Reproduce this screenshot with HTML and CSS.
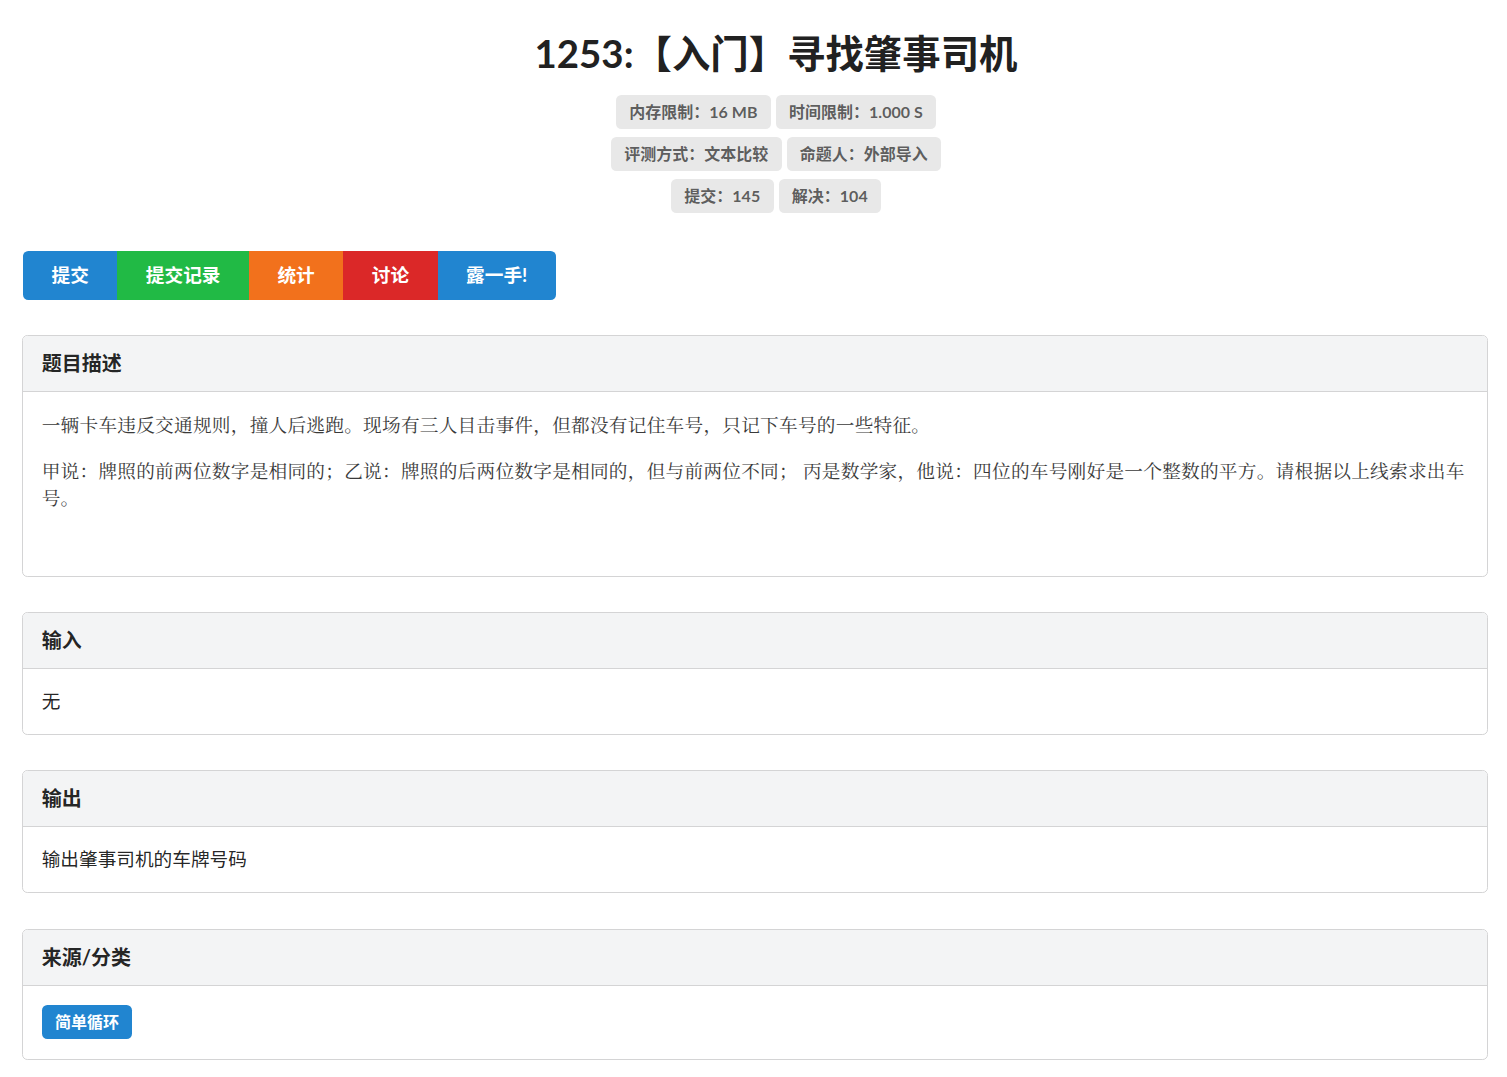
FILE: index.html
```html
<!DOCTYPE html>
<html lang="zh-CN">
<head>
<meta charset="utf-8">
<title>1253:【入门】寻找肇事司机</title>
<link rel="stylesheet" href="styles.css">
</head>
<body>
<div class="page">
  <div class="top">
    <h1 class="title">1253:【入门】寻找肇事司机</h1>
    <div class="meta">
      <div class="meta-row">
        <span class="label">内存限制：16 MB</span>
        <span class="label">时间限制：1.000 S</span>
      </div>
      <div class="meta-row">
        <span class="label">评测方式：文本比较</span>
        <span class="label">命题人：外部导入</span>
      </div>
      <div class="meta-row">
        <span class="label">提交：145</span>
        <span class="label">解决：104</span>
      </div>
    </div>
  </div>

  <div class="buttons">
    <a class="btn blue">提交</a>
    <a class="btn green">提交记录</a>
    <a class="btn orange">统计</a>
    <a class="btn red">讨论</a>
    <a class="btn blue">露一手!</a>
  </div>

  <div class="card">
    <div class="card-head">题目描述</div>
    <div class="card-body desc">
      <p>一辆卡车违反交通规则，撞人后逃跑。现场有三人目击事件，但都没有记住车号，只记下车号的一些特征。</p>
      <p>甲说：牌照的前两位数字是相同的；乙说：牌照的后两位数字是相同的，但与前两位不同； 丙是数学家，他说：四位的车号刚好是一个整数的平方。请根据以上线索求出车号。</p>
    </div>
  </div>

  <div class="card">
    <div class="card-head">输入</div>
    <div class="card-body"><p>无</p></div>
  </div>

  <div class="card">
    <div class="card-head">输出</div>
    <div class="card-body"><p>输出肇事司机的车牌号码</p></div>
  </div>

  <div class="card last">
    <div class="card-head">来源/分类</div>
    <div class="card-body tags"><span class="tag">简单循环</span></div>
  </div>
</div>
</body>
</html>
```
FILE: styles.css
```css
html, body {
  margin: 0;
  padding: 0;
  background: #fff;
}
body {
  font-family: Lato, "Noto Sans CJK SC", "Noto Sans", sans-serif;
  font-size: 18.67px;
  line-height: 27px;
  color: rgba(0, 0, 0, 0.87);
}
.page {
  padding: 29px 19px 20px 22px;
}
.top {
  padding-left: 42px;
}
.title {
  margin: 0;
  text-align: center;
  font-size: 38.4px;
  line-height: 48px;
  font-weight: 700;
  color: #212121;
}
.meta {
  margin-top: 18px;
  display: flex;
  flex-direction: column;
  align-items: center;
  gap: 8px;
}
.meta-row {
  display: flex;
  gap: 5px;
}
.label {
  display: inline-block;
  background: #e8e8e8;
  color: rgba(0, 0, 0, 0.62);
  font-size: 16px;
  line-height: 16px;
  font-weight: 700;
  padding: 9px 13.33px;
  border-radius: 5.33px;
}
.buttons {
  margin-top: 38px;
  margin-left: 1px;
  display: inline-flex;
  border-radius: 5.33px;
  overflow: hidden;
}
.btn {
  display: block;
  color: #fff;
  font-weight: 700;
  font-size: 18.67px;
  line-height: 19px;
  padding: 15px 28.5px;
  cursor: pointer;
}
.blue { background: #2185d0; }
.green { background: #21ba45; }
.orange { background: #f2711c; }
.red { background: #db2828; }
.card {
  margin-top: 35px;
  border: 1px solid #d4d4d5;
  border-radius: 5.33px;
  overflow: hidden;
}
.card.last {
  margin-top: 36px;
}
.card-head {
  background: #f3f4f5;
  border-bottom: 1px solid #d4d4d5;
  padding: 15px 18.67px;
  font-size: 20px;
  line-height: 25px;
  font-weight: 700;
  color: rgba(0, 0, 0, 0.87);
}
.card-body {
  padding: 19px 18.67px;
}
.card-body p {
  margin: 0 0 19px;
}
.card-body p:last-child {
  margin-bottom: 0;
}
.desc {
  font-family: "Noto Serif CJK SC", "Liberation Serif", serif;
  color: #3a3a3a;
  letter-spacing: 0.25px;
  padding-bottom: 65px;
}
.tags {
  line-height: 0;
  padding-bottom: 20px;
}
.tag {
  display: inline-block;
  background: #2185d0;
  color: #fff;
  font-size: 16px;
  line-height: 16px;
  font-weight: 700;
  padding: 9px 13.33px;
  border-radius: 5.33px;
}
```
